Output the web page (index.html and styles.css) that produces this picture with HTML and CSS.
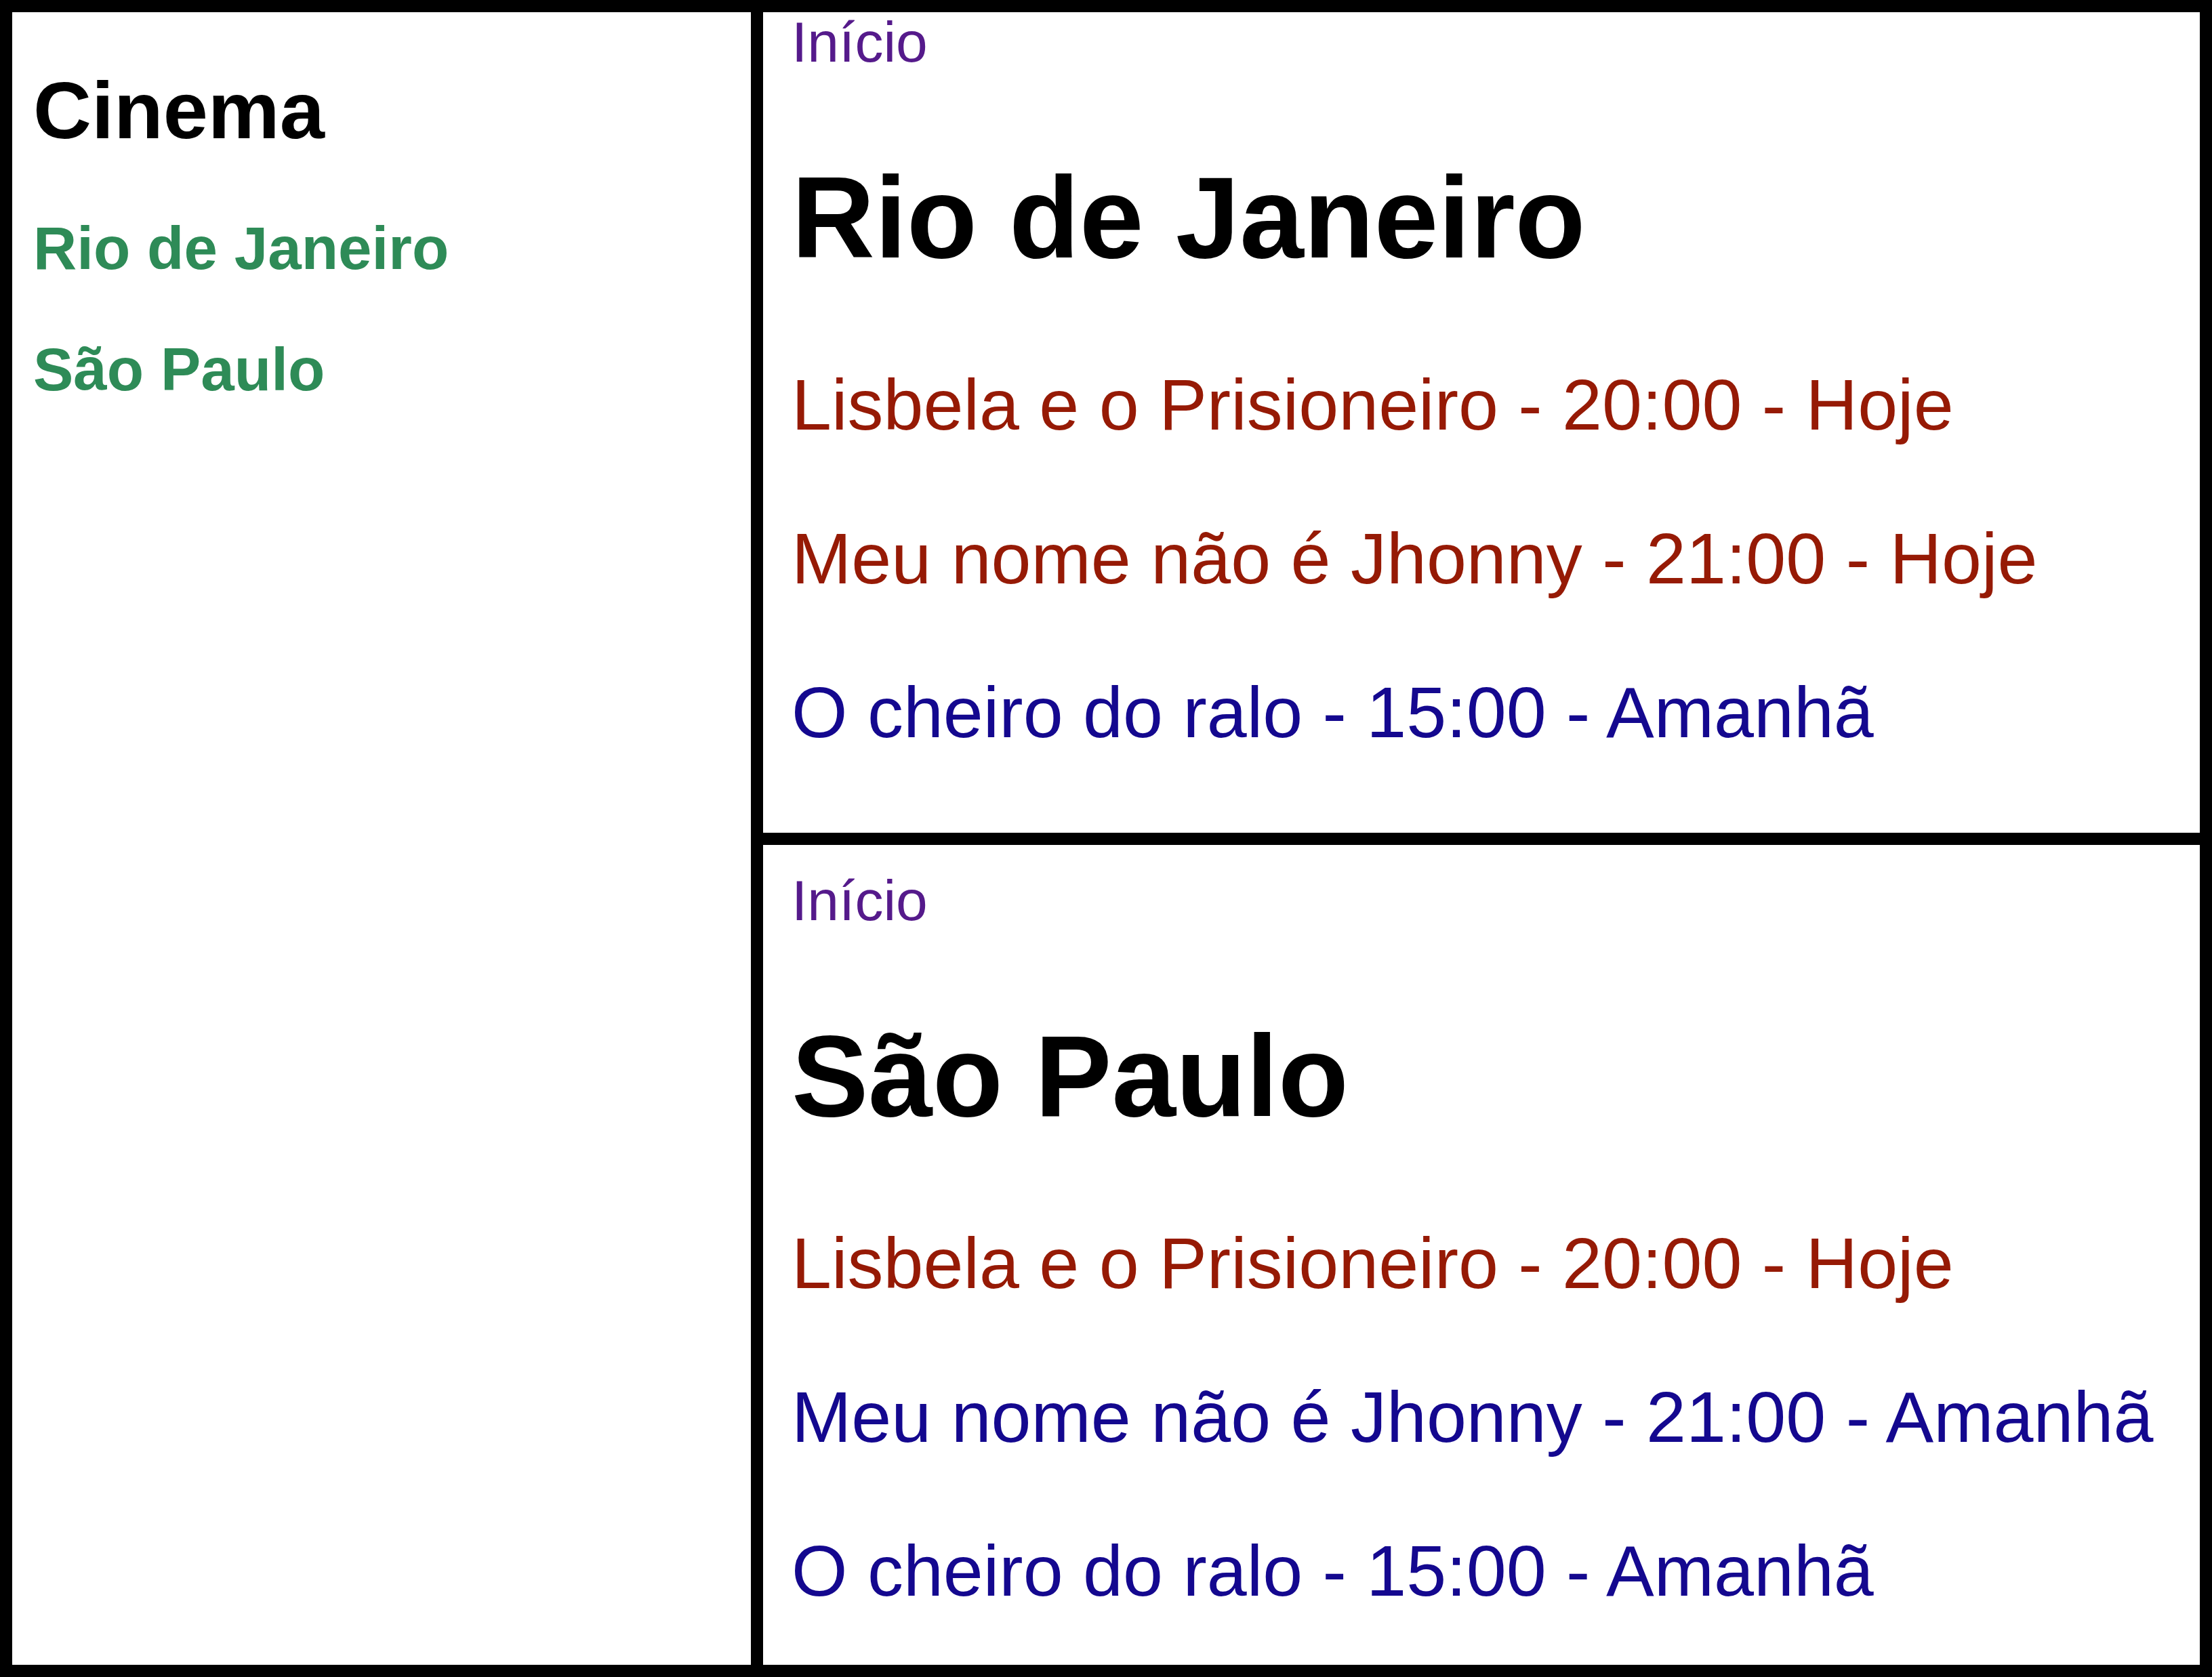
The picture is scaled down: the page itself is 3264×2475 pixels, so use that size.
FILE: index.html
```html
<!DOCTYPE html>
<html lang="pt-BR">
<head>
<meta charset="utf-8">
<title>Cinema</title>
<link rel="stylesheet" href="styles.css">
</head>
<body>
<div class="frameset">
  <nav class="frame frame-menu">
    <h2 class="menu-title">Cinema</h2>
    <a class="menu-link" href="#rio">Rio de Janeiro</a>
    <a class="menu-link" href="#sp">São Paulo</a>
  </nav>
  <div class="frame-stack">
    <section class="frame frame-page">
      <div class="page page-scrolled">
        <a class="home-link" href="#">Início</a>
        <h1 class="city">Rio de Janeiro</h1>
        <p class="show show-today">Lisbela e o Prisioneiro - 20:00 - Hoje</p>
        <p class="show show-today">Meu nome não é Jhonny - 21:00 - Hoje</p>
        <p class="show show-tomorrow">O cheiro do ralo - 15:00 - Amanhã</p>
      </div>
    </section>
    <section class="frame frame-page">
      <div class="page">
        <a class="home-link" href="#">Início</a>
        <h1 class="city">São Paulo</h1>
        <p class="show show-today">Lisbela e o Prisioneiro - 20:00 - Hoje</p>
        <p class="show show-tomorrow">Meu nome não é Jhonny - 21:00 - Amanhã</p>
        <p class="show show-tomorrow">O cheiro do ralo - 15:00 - Amanhã</p>
      </div>
    </section>
  </div>
</div>
</body>
</html>
```
FILE: styles.css
```css
html, body {
  margin: 0;
  padding: 0;
  background: #000;
}

body {
  font-family: "Liberation Sans", Arial, sans-serif;
}

.frameset {
  box-sizing: border-box;
  width: 3264px;
  height: 2475px;
  border: 18px solid #000;
  background: #000;
  display: grid;
  grid-template-columns: 1090px 1fr;
  column-gap: 18px;
}

.frame {
  background: #fff;
  overflow: hidden;
}

.frame-stack {
  display: grid;
  grid-template-rows: 1211px 1fr;
  row-gap: 18px;
  min-height: 0;
}

/* Left menu frame */
.frame-menu {
  display: flex;
  flex-direction: column;
  align-items: flex-start;
  padding: 76px 31px 0;
}

.menu-title {
  margin: 0 0 84px;
  font-size: 119px;
  font-weight: bold;
  line-height: normal;
  color: #000;
}

.menu-link {
  font-size: 89px;
  font-weight: bold;
  line-height: normal;
  color: #2e8b57;
  text-decoration: none;
  margin-bottom: 76px;
}

/* Right page frames */
.frame-page {
  padding: 0 42px;
}

.page {
  padding-top: 34px;
}

.page-scrolled {
  margin-top: -38px;
}

.home-link {
  display: inline-block;
  font-size: 84px;
  line-height: normal;
  color: #551a8b;
  text-decoration: none;
}

.city {
  margin: 112px 0 118px;
  font-size: 170px;
  font-weight: bold;
  line-height: normal;
  color: #000;
}

.show {
  margin: 106px 0;
  font-size: 106px;
  line-height: normal;
}

.show-today {
  color: #961a05;
}

.show-tomorrow {
  color: #14088f;
}
```
